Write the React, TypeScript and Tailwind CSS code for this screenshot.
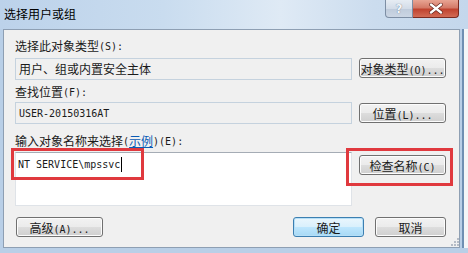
import React from "react";

const cjk = "font-['Noto_Sans_CJK_SC',sans-serif]";

function Mixed({ text }: { text: string }) {
  const parts = text.split(/([\u0000-\u00ff]+)/).filter((p) => p.length > 0);
  return (
    <>
      {parts.map((p, i) =>
        /^[\u0000-\u00ff]+$/.test(p) ? (
          <span key={i} className="font-['DejaVu_Sans_Mono',monospace] text-[10px] whitespace-pre">
            {p}
          </span>
        ) : (
          <span key={i} className="font-['Noto_Sans_CJK_SC',sans-serif] text-[12px]">
            {p}
          </span>
        )
      )}
    </>
  );
}

function Btn({ label, w, def }: { label: string; w: string; def?: boolean }) {
  return (
    <div
      className={`${w} h-[20px] rounded-[3px] border flex items-center justify-center text-[#1a1a1a] leading-none ${
        def
          ? "border-[#3c7fb1] bg-[linear-gradient(to_bottom,#eaf6fd_0%,#d9f0fc_50%,#bee6fd_51%,#a7d9f5_100%)] shadow-[inset_0_0_0_1px_#b6dff7]"
          : "border-[#707070] bg-[linear-gradient(to_bottom,#f2f2f2_0%,#ebebeb_50%,#dddddd_51%,#cfcfcf_100%)] shadow-[inset_0_0_0_1px_#fcfcfc]"
      }`}
    >
      <span className="whitespace-nowrap">
        <Mixed text={label} />
      </span>
    </div>
  );
}

export default function App() {
  return (
    <div className="relative w-[468px] h-[253px] overflow-hidden bg-[#b9cfe7] text-[#1a1a1a]">
      {/* title bar */}
      <div className="flex h-[29px] items-start bg-[linear-gradient(to_right,#bcd2ea_0%,#c9dcef_35%,#dfeaf5_60%,#cbdcee_80%,#c4d7ec_100%)]">
        <div className={`${cjk} pl-[4px] pt-[6px] text-[12px] leading-[16px] text-black`}>选择用户或组</div>
        <div className="ml-auto mr-[9px] flex">
          <div className="flex h-[18px] w-[28px] items-center justify-center rounded-bl-[4px] border border-t-0 border-[#7d8ea4] bg-[linear-gradient(to_bottom,#e6ecf3_0%,#d3dce8_50%,#bfcbdb_51%,#cbd6e4_100%)]">
            <span className="font-['DejaVu_Sans',sans-serif] text-[12px] font-bold leading-none text-[#f4f7fb] [text-shadow:0_0_1px_#4a5a70]">?</span>
          </div>
          <div className="flex h-[18px] w-[46px] items-center justify-center rounded-br-[4px] border border-l-0 border-t-0 border-[#7a2a20] bg-[linear-gradient(to_bottom,#e8a493_0%,#d47a68_45%,#c0432f_55%,#d26b55_100%)]">
            <svg width="14" height="11" viewBox="0 0 14 11">
              <path d="M2 1.5 L12 9.5 M12 1.5 L2 9.5" stroke="#5a1a12" strokeWidth="3.6" strokeLinecap="round" />
              <path d="M2 1.5 L12 9.5 M12 1.5 L2 9.5" stroke="#ffffff" strokeWidth="2.4" strokeLinecap="round" />
            </svg>
          </div>
        </div>
      </div>

      <div className="flex">
        {/* content */}
        <div className="ml-[3px] h-[219px] w-[457px] border border-[#8e9fb3] bg-[#f0f0f0]">
          <div className="ml-[11px] flex w-[431px] flex-col">
            {/* section 1 */}
            <div className="mt-[7px] flex h-[18px] items-center">
              <Mixed text="选择此对象类型(S):" />
            </div>
            <div className="mt-[3px] flex items-start gap-[7px]">
              <div className="flex h-[22px] w-[337px] items-center border border-[#c5d2de] bg-[#f0f0f0] pl-[3px]">
                <Mixed text="用户、组或内置安全主体" />
              </div>
              <Btn label="对象类型(O)..." w="w-[87px]" />
            </div>

            {/* section 2 */}
            <div className="mt-[3px] flex h-[18px] items-center">
              <Mixed text="查找位置(F):" />
            </div>
            <div className="mt-[1px] flex items-start gap-[7px]">
              <div className="flex h-[22px] w-[337px] items-center border border-[#c5d2de] bg-[#f0f0f0] pl-[3px]">
                <Mixed text="USER-20150316AT" />
              </div>
              <div className="mt-[1px]">
                <Btn label="位置(L)..." w="w-[87px]" />
              </div>
            </div>

            {/* section 3 */}
            <div className="mt-[8px] flex h-[18px] items-center whitespace-nowrap">
              <Mixed text="输入对象名称来选择(" />
              <span className={`${cjk} text-[12px] text-[#0a5bb5] underline`}>示例</span>
              <Mixed text=")(E):" />
            </div>
            <div className="mt-[2px] flex items-start gap-[7px]">
              <div className="h-[54px] w-[337px] border border-[#dfe3e8] border-t-[#a5acb5] bg-white pl-[2px] pt-[3px]">
                <div className="flex h-[16px] items-center">
                  <Mixed text="NT SERVICE\mpssvc" />
                  <span className="ml-[1px] h-[15px] w-[1px] bg-black" />
                </div>
              </div>
              <div className="mt-[3px]">
                <Btn label="检查名称(C)" w="w-[87px]" />
              </div>
            </div>

            {/* bottom buttons */}
            <div className="mt-[11px] flex items-start">
              <div className="ml-[1px]">
                <Btn label="高级(A)..." w="w-[87px]" />
              </div>
              <div className="ml-auto flex gap-[11px]">
                <Btn label="确定" w="w-[71px]" def />
                <Btn label="取消" w="w-[71px]" />
              </div>
            </div>
          </div>
        </div>
        {/* right edge */}
        <div className="ml-[2px] h-[219px] w-[2px] bg-[#6f8fb3]" />
        <div className="h-[219px] flex-1 bg-[#f4f6f8]" />
      </div>

      {/* resize grip */}
      <div className="absolute left-[451px] top-[238px] grid grid-cols-3 gap-[1px]">
        <span className="h-[2px] w-[2px]" />
        <span className="h-[2px] w-[2px]" />
        <span className="h-[2px] w-[2px] bg-[#b5bcc6]" />
        <span className="h-[2px] w-[2px]" />
        <span className="h-[2px] w-[2px] bg-[#b5bcc6]" />
        <span className="h-[2px] w-[2px] bg-[#b5bcc6]" />
        <span className="h-[2px] w-[2px] bg-[#b5bcc6]" />
        <span className="h-[2px] w-[2px] bg-[#b5bcc6]" />
        <span className="h-[2px] w-[2px] bg-[#b5bcc6]" />
      </div>

      {/* red annotation boxes */}
      <div className="absolute left-[11px] top-[148px] h-[32px] w-[133px] border-[3px] border-[#e0393e]" />
      <div className="absolute left-[346px] top-[148px] h-[38px] w-[107px] border-[3px] border-[#e0393e]" />
    </div>
  );
}
